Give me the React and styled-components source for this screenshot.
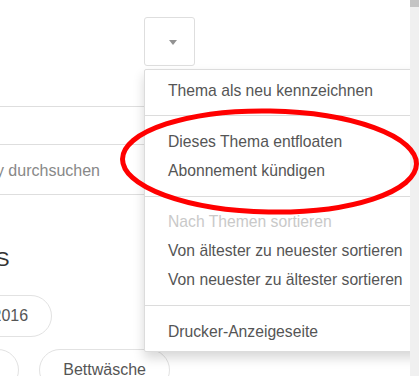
import React from "react";
import styled, { createGlobalStyle } from "styled-components";

const Global = createGlobalStyle`
  html, body { margin: 0; padding: 0; background: #fff; }
  body { font-family: "Liberation Sans", Arial, sans-serif; }
`;

const Page = styled.div`
  position: relative;
  display: flex;
  width: 419px;
  height: 376px;
  overflow: hidden;
  background: #fff;
`;

const Main = styled.div`
  position: relative;
  flex: none;
  width: 410px;
  height: 376px;
  overflow: hidden;
`;

const Scrollbar = styled.div`
  flex: none;
  width: 9px;
  height: 376px;
  background: #f0f0f0;
  display: flex;
  flex-direction: column;
`;

const Thumb = styled.div`
  height: 7px;
  background: #c4c4c4;
`;

const TopBar = styled.div`
  box-sizing: border-box;
  height: 107px;
  border-bottom: 1px solid #dedede;
  padding: 17px 0 0 144px;
`;

const DropdownWrap = styled.div`
  position: relative;
  width: 51px;
  z-index: 3;
`;

const ToggleButton = styled.div`
  box-sizing: border-box;
  width: 51px;
  height: 49px;
  border: 1px solid #dedede;
  border-radius: 3px;
  background: #fff;
  display: flex;
  align-items: center;
  justify-content: center;
  padding: 1px 0 0 6px;
`;

const Caret = styled.span`
  width: 0;
  height: 0;
  border-left: 4.5px solid transparent;
  border-right: 4.5px solid transparent;
  border-top: 5px solid #929292;
`;

const Menu = styled.div`
  position: absolute;
  top: 52px;
  left: 0;
  width: 300px;
  background: #fff;
  border: 1px solid #dcdcdc;
  border-radius: 2px;
  box-shadow: 0 6px 12px rgba(0, 0, 0, 0.16);
`;

const MenuSection = styled.div`
  padding: ${(p) => p.$pt}px 0 ${(p) => p.$pb}px;
  & + & {
    border-top: 1px solid #dcdcdc;
  }
`;

const MenuItem = styled.div`
  height: 29px;
  line-height: 29px;
  padding-left: 23px;
  font-size: 15.7px;
  white-space: nowrap;
  color: ${(p) => (p.$disabled ? "#c9c9c9" : "#555")};
`;

const Sidebar = styled.div`
  margin-left: -90px;
  width: 340px;
  display: flex;
  flex-direction: column;
`;

const SearchBox = styled.div`
  box-sizing: border-box;
  margin-top: 37px;
  height: 51px;
  border: 1px solid #dedede;
  padding: 2px 0 0 12px;
  display: flex;
  align-items: center;
  font-size: 16px;
  color: #888;
`;

const Heading = styled.h2`
  margin: 49px 0 0;
  padding-left: 44px;
  height: 30px;
  line-height: 30px;
  font-size: 21px;
  font-weight: normal;
  color: #333;
`;

const PillList = styled.div`
  margin-top: 21px;
  padding-left: 7px;
  display: flex;
  flex-direction: column;
  gap: 12px;
`;

const PillRow = styled.div`
  display: flex;
  gap: 20px;
`;

const Pill = styled.span`
  box-sizing: border-box;
  height: 42px;
  padding: 0 23px;
  border: 1px solid #e2e2e2;
  border-radius: 21px;
  display: inline-flex;
  align-items: center;
  font-size: 16px;
  color: #555;
  white-space: nowrap;
`;

const Annotation = styled.svg`
  position: absolute;
  left: 0;
  top: 0;
  width: 419px;
  height: 376px;
  pointer-events: none;
  z-index: 10;
`;

const sections = [
  { pt: 6, pb: 10, items: [{ label: "Thema als neu kennzeichnen" }] },
  {
    pt: 11,
    pb: 11,
    items: [{ label: "Dieses Thema entfloaten" }, { label: "Abonnement kündigen" }],
  },
  {
    pt: 10,
    pb: 11,
    items: [
      { label: "Nach Themen sortieren", disabled: true },
      { label: "Von ältester zu neuester sortieren" },
      { label: "Von neuester zu ältester sortieren" },
    ],
  },
  { pt: 11, pb: 5, items: [{ label: "Drucker-Anzeigeseite" }] },
];

export default function App() {
  return (
    <>
      <Global />
      <Page>
        <Main>
          <TopBar>
            <DropdownWrap>
              <ToggleButton>
                <Caret />
              </ToggleButton>
              <Menu>
                {sections.map((s, i) => (
                  <MenuSection key={i} $pt={s.pt} $pb={s.pb}>
                    {s.items.map((it) => (
                      <MenuItem key={it.label} $disabled={it.disabled}>
                        {it.label}
                      </MenuItem>
                    ))}
                  </MenuSection>
                ))}
              </Menu>
            </DropdownWrap>
          </TopBar>
          <Sidebar>
            <SearchBox>Community durchsuchen</SearchBox>
            <Heading>TAGS</Heading>
            <PillList>
              <PillRow>
                <Pill>Herbst 2016</Pill>
              </PillRow>
              <PillRow>
                <Pill>Decken</Pill>
                <Pill>Bettwäsche</Pill>
              </PillRow>
            </PillList>
          </Sidebar>
        </Main>
        <Scrollbar>
          <Thumb />
        </Scrollbar>
        <Annotation viewBox="0 0 419 376">
          <ellipse
            cx="269.5"
            cy="161.5"
            rx="147"
            ry="50.5"
            fill="none"
            stroke="#f00"
            strokeWidth="5"
            transform="rotate(1 269.5 161.5)"
          />
        </Annotation>
      </Page>
    </>
  );
}
